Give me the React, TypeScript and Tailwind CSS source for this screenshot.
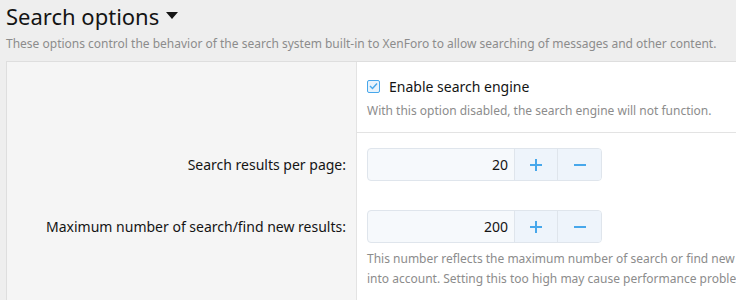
import React from 'react';

const font = { fontFamily: '"Segoe UI", "Noto Sans", "Open Sans", sans-serif' };

const Spinner: React.FC<{ value: string }> = ({ value }) => (
  <div className="flex h-[33px] w-[235px] overflow-hidden rounded-[4px] border border-[#dfe5ec] bg-[#f6f9fc]">
    <input
      readOnly
      value={value}
      className="w-[146px] bg-transparent px-[6px] text-right text-[14px] text-[#141414] outline-none"
    />
    <button className="flex w-[43px] items-center justify-center border-l border-[#dfe5ec] bg-[#eef4fb]">
      <svg width="12" height="12" viewBox="0 0 12 12">
        <path d="M6 0v12M0 6h12" stroke="#47a7eb" strokeWidth="2" />
      </svg>
    </button>
    <button className="flex flex-1 items-center justify-center border-l border-[#dfe5ec] bg-[#eef4fb]">
      <svg width="12" height="12" viewBox="0 0 12 12">
        <path d="M0 6h12" stroke="#47a7eb" strokeWidth="2" />
      </svg>
    </button>
  </div>
);

const App: React.FC = () => {
  return (
    <div className="h-[300px] w-[736px] overflow-hidden bg-[#eeeeee] pl-[6px]" style={font}>
      <h1 className="flex items-center gap-[7px] pt-[1px] text-[22px] leading-[30px] text-[#141414]">
        Search options
        <svg width="12" height="8" viewBox="0 0 12 8">
          <path d="M0 0h12L6 7z" fill="#141414" />
        </svg>
      </h1>
      <p className="mt-[5px] whitespace-nowrap text-[12px] leading-[16px] text-[#8c8c8c]">
        These options control the behavior of the search system built-in to XenForo to allow searching of messages and other content.
      </p>

      <div className="mt-[9px] w-[800px] border border-[#dedede] bg-white">
        {/* Enable toggle */}
        <div className="flex">
          <div className="w-[349px] shrink-0 bg-[#f5f5f5]" />
          <div className="flex-1 border-b border-l border-[#e3e3e3] px-[10px] pt-[14px] pb-[12px]">
            <label className="flex h-[20px] items-center gap-[9px] text-[14px] text-[#141414]">
              <span className="flex h-[13px] w-[13px] items-center justify-center rounded-[2px] border border-[#47a7eb] bg-[#e8f3fc]">
                <svg width="9" height="8" viewBox="0 0 9 8">
                  <path d="M1 4l2.5 2.5L8 1.5" stroke="#47a7eb" strokeWidth="1.4" fill="none" />
                </svg>
              </span>
              Enable search engine
            </label>
            <p className="mt-[6px] whitespace-nowrap text-[12px] leading-[18px] text-[#8c8c8c]">
              With this option disabled, the search engine will not function.
            </p>
          </div>
        </div>

        {/* Results per page */}
        <div className="flex">
          <div className="w-[349px] shrink-0 bg-[#f5f5f5] pt-[15px] pr-[10px] text-[14px] text-[#141414]">
            <div className="flex h-[33px] items-center justify-end">Search results per page:</div>
          </div>
          <div className="flex-1 border-l border-[#e3e3e3] px-[10px] pt-[15px]">
            <Spinner value="20" />
          </div>
        </div>

        {/* Max results */}
        <div className="flex">
          <div className="w-[349px] shrink-0 bg-[#f5f5f5] pt-[29px] pr-[10px] text-[14px] text-[#141414]">
            <div className="flex h-[33px] items-center justify-end">Maximum number of search/find new results:</div>
          </div>
          <div className="flex-1 border-l border-[#e3e3e3] px-[10px] pt-[29px] pb-[20px]">
            <Spinner value="200" />
            <p className="mt-[6px] whitespace-nowrap text-[12px] leading-[20px] text-[#8c8c8c]">
              This number reflects the maximum number of search or find new results that will be taken
              <br />
              into account. Setting this too high may cause performance problems.
            </p>
          </div>
        </div>
      </div>
    </div>
  );
};

export default App;
